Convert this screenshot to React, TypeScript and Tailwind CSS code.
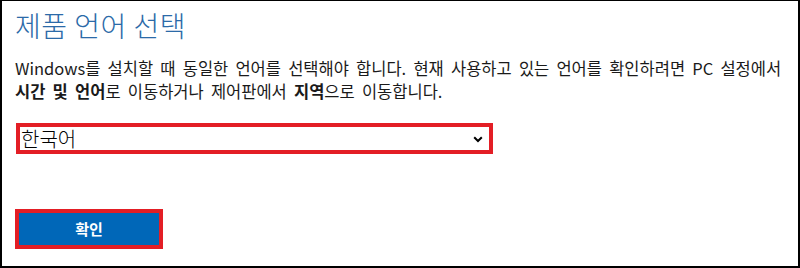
export default function App() {
  return (
    <div
      className="w-[800px] h-[268px] bg-white border-l-2 border-r-2 border-b-2 border-t border-black overflow-hidden"
      style={{ fontFamily: '"Noto Sans CJK KR", "Noto Sans", sans-serif' }}
    >
      <div className="pl-[13px] pt-[6px]">
        <h1 className="text-[28px] leading-[36px] font-light text-[#2b6aa8] tracking-[0.5px]">제품 언어 선택</h1>
        <p className="mt-[14px] text-[16.5px] leading-[23px] text-[#1a1a1a] whitespace-nowrap [word-spacing:3.5px]">
          Windows를 설치할 때 동일한 언어를 선택해야 합니다. 현재 사용하고 있는 언어를 확인하려면 PC 설정에서
          <br />
          <b className="font-bold">시간 및 언어</b>로 이동하거나 제어판에서 <b className="font-bold">지역</b>으로 이동합니다.
        </p>
        <div className="mt-[20px] ml-px w-[477px] h-[31px] border-4 border-[#e31e25] bg-white flex items-center justify-between pl-[1px] pr-[6px]">
          <span className="text-[20px] leading-none text-black font-light">한국어</span>
          <svg width="10" height="7" viewBox="0 0 10 7" className="mt-[1px]">
            <path d="M1.2 1.2 L5 5 L8.8 1.2" fill="none" stroke="#000" strokeWidth="2" />
          </svg>
        </div>
        <div className="mt-[55px] w-[148px] h-[40px] border-4 border-[#e31e25] bg-[#0067b8] flex items-center justify-center">
          <span className="text-[15px] font-bold text-white">확인</span>
        </div>
      </div>
    </div>
  );
}
